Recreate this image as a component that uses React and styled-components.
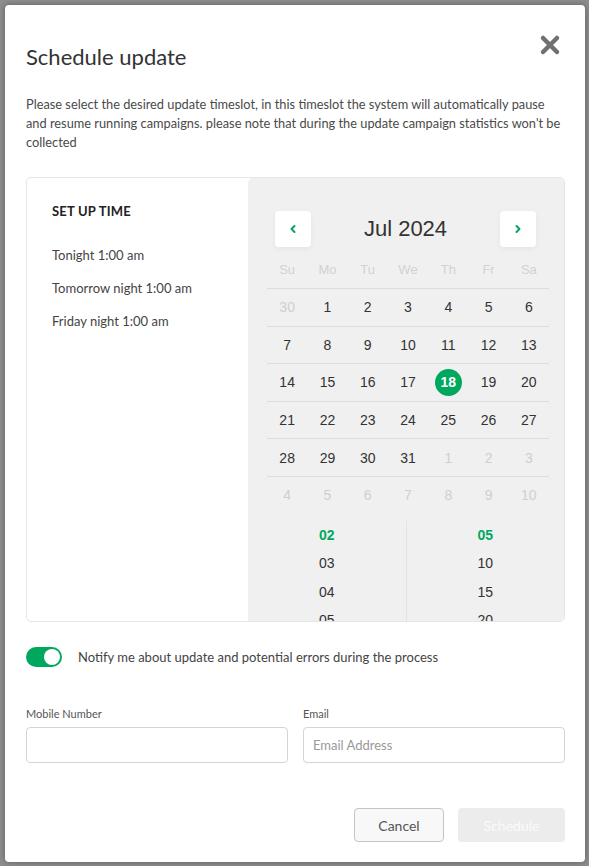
import React from 'react';
import styled, { createGlobalStyle } from 'styled-components';

const Global = createGlobalStyle`
  html, body {
    margin: 0;
    padding: 0;
    background: #8e8e8e;
  }
  body {
    font-family: Lato, "Open Sans", sans-serif;
    color: #333;
  }
`;

const Page = styled.div`
  padding: 5px 4px 4px 5px;
  box-sizing: border-box;
  width: 589px;
  height: 866px;
`;

const Modal = styled.div`
  box-sizing: border-box;
  width: 580px;
  height: 857px;
  background: #fff;
  border-radius: 4px;
  box-shadow: 0 0 6px rgba(0, 0, 0, 0.35);
  padding: 0 20px 0 21px;
  display: flex;
  flex-direction: column;
`;

const Header = styled.div`
  display: flex;
  justify-content: space-between;
  align-items: flex-start;
  padding-top: 38px;
`;

const Title = styled.h1`
  margin: 0;
  font-size: 22px;
  font-weight: 400;
  color: #333;
  line-height: 28px;
`;

const Close = styled.button`
  border: none;
  background: none;
  padding: 0;
  margin: -9px 4px 0 0;
  width: 22px;
  height: 22px;
  cursor: pointer;
`;

const Description = styled.p`
  margin: 24px 0 0;
  font-size: 12.8px;
  line-height: 19px;
  color: #4a4a4a;
`;

const Card = styled.div`
  margin-top: 25px;
  height: 443px;
  border: 1px solid #e6e6e6;
  border-radius: 5px;
  display: flex;
  overflow: hidden;
`;

const Presets = styled.div`
  width: 221px;
  padding: 25px 0 0 25px;
  box-sizing: border-box;
  display: flex;
  flex-direction: column;
`;

const PresetTitle = styled.div`
  font-size: 13px;
  font-weight: 700;
  color: #222;
  letter-spacing: 0.2px;
  margin-bottom: 27px;
`;

const Preset = styled.div`
  font-size: 13px;
  color: #444;
  height: 33px;
  line-height: 18px;
`;

const CalendarPanel = styled.div`
  flex: 1;
  background: #f0f0f0;
  border-top-left-radius: 5px;
  display: flex;
  flex-direction: column;
  font-family: "Liberation Sans", Arial, sans-serif;
`;

const MonthBar = styled.div`
  display: flex;
  align-items: center;
  justify-content: space-between;
  padding: 33px 28px 0 27px;
`;

const NavButton = styled.button`
  width: 36px;
  height: 36px;
  border: none;
  border-radius: 4px;
  background: #fff;
  box-shadow: 0 2px 6px rgba(0, 0, 0, 0.05);
  display: flex;
  align-items: center;
  justify-content: center;
  padding: 0;
`;

const MonthLabel = styled.div`
  font-size: 22px;
  color: #333;
`;

const Grid = styled.div`
  margin: 4px 15px 0 19px;
  display: grid;
  grid-template-columns: repeat(7, 1fr);
`;

const WeekDay = styled.div`
  height: 37px;
  display: flex;
  align-items: center;
  justify-content: center;
  font-size: 13px;
  color: #d2d2d2;
  border-bottom: 1px solid #dcdcdc;
`;

const Day = styled.div`
  height: 36.6px;
  display: flex;
  align-items: center;
  justify-content: center;
  font-size: 14px;
  color: ${p => (p.$muted ? '#cfcfcf' : '#333')};
  border-bottom: ${p => (p.$last ? 'none' : '1px solid #dcdcdc')};
`;

const Selected = styled.span`
  width: 27px;
  height: 27px;
  border-radius: 50%;
  background: #00a85f;
  color: #fff;
  font-weight: 700;
  display: flex;
  align-items: center;
  justify-content: center;
`;

const TimePicker = styled.div`
  margin-top: 7px;
  flex: 1;
  display: flex;
  overflow: hidden;
`;

const TimeColumn = styled.div`
  flex: 1;
  display: flex;
  flex-direction: column;
  align-items: center;
  & + & {
    border-left: 1px solid #e3e3e3;
  }
`;

const TimeItem = styled.div`
  height: 28.5px;
  flex-shrink: 0;
  display: flex;
  align-items: center;
  font-size: 14px;
  font-weight: ${p => (p.$active ? 700 : 400)};
  color: ${p => (p.$active ? '#00a85f' : '#333')};
`;

const NotifyRow = styled.label`
  margin-top: 25px;
  display: flex;
  align-items: center;
  gap: 16px;
  font-size: 13px;
  color: #444;
`;

const Toggle = styled.span`
  width: 36px;
  height: 20px;
  border-radius: 10px;
  background: #00a85f;
  display: flex;
  align-items: center;
  justify-content: flex-end;
  padding: 0 2px;
  box-sizing: border-box;
  &::after {
    content: '';
    width: 16px;
    height: 16px;
    border-radius: 50%;
    background: #fff;
  }
`;

const Fields = styled.div`
  margin-top: 40px;
  display: grid;
  grid-template-columns: 1fr 1fr;
  gap: 15px;
`;

const Field = styled.div`
  display: flex;
  flex-direction: column;
`;

const Label = styled.div`
  font-size: 11px;
  color: #555;
  height: 14px;
  margin-bottom: 6px;
`;

const Input = styled.input`
  height: 36px;
  box-sizing: border-box;
  border: 1px solid #d4d4d4;
  border-radius: 4px;
  padding: 0 9px;
  font-family: Lato, sans-serif;
  font-size: 13px;
  color: #333;
  background: #fff;
  outline: none;
  &::placeholder {
    color: #999;
  }
`;

const Footer = styled.div`
  margin-top: 45px;
  display: flex;
  justify-content: flex-end;
  gap: 14px;
`;

const Button = styled.button`
  height: 34px;
  border-radius: 4px;
  font-family: Lato, sans-serif;
  font-size: 14px;
  padding: 0;
  width: ${p => (p.$primary ? '107px' : '90px')};
  border: ${p => (p.$primary ? 'none' : '1px solid #c4c4c4')};
  background: ${p => (p.$primary ? '#ececec' : '#f8f8f8')};
  color: ${p => (p.$primary ? '#fafafa' : '#555')};
`;

const Chevron = ({ dir }) => (
  <svg width="10" height="10" viewBox="0 0 10 10">
    <path
      d={dir === 'left' ? 'M6.5 2 L3.5 5 L6.5 8' : 'M3.5 2 L6.5 5 L3.5 8'}
      fill="none"
      stroke="#00a85f"
      strokeWidth="2"
      strokeLinecap="round"
      strokeLinejoin="round"
    />
  </svg>
);

const CloseIcon = () => (
  <svg width="22" height="22" viewBox="0 0 22 22">
    <path d="M4 4 L18 18 M18 4 L4 18" stroke="#707070" strokeWidth="4.5" strokeLinecap="round" />
  </svg>
);

const weekDays = ['Su', 'Mo', 'Tu', 'We', 'Th', 'Fr', 'Sa'];

const buildDays = () => {
  const days = [{ n: 30, muted: true }];
  for (let i = 1; i <= 31; i++) days.push({ n: i });
  for (let i = 1; i <= 10; i++) days.push({ n: i, muted: true });
  return days;
};

export default function App() {
  const days = buildDays();
  const hours = ['02', '03', '04', '05'];
  const minutes = ['05', '10', '15', '20'];

  return (
    <Page>
      <Global />
      <Modal>
        <Header>
          <Title>Schedule update</Title>
          <Close aria-label="close"><CloseIcon /></Close>
        </Header>
        <Description>
          Please select the desired update timeslot, in this timeslot the system will automatically pause
          and resume running campaigns. please note that during the update campaign statistics won't be
          collected
        </Description>

        <Card>
          <Presets>
            <PresetTitle>SET UP TIME</PresetTitle>
            <Preset>Tonight 1:00 am</Preset>
            <Preset>Tomorrow night 1:00 am</Preset>
            <Preset>Friday night 1:00 am</Preset>
          </Presets>
          <CalendarPanel>
            <MonthBar>
              <NavButton><Chevron dir="left" /></NavButton>
              <MonthLabel>Jul 2024</MonthLabel>
              <NavButton><Chevron dir="right" /></NavButton>
            </MonthBar>
            <Grid>
              {weekDays.map(d => <WeekDay key={d}>{d}</WeekDay>)}
              {days.map((d, i) => (
                <Day key={i} $muted={d.muted} $last={i >= 35}>
                  {!d.muted && d.n === 18 ? <Selected>18</Selected> : d.n}
                </Day>
              ))}
            </Grid>
            <TimePicker>
              <TimeColumn>
                {hours.map((h, i) => <TimeItem key={h} $active={i === 0}>{h}</TimeItem>)}
              </TimeColumn>
              <TimeColumn>
                {minutes.map((m, i) => <TimeItem key={m} $active={i === 0}>{m}</TimeItem>)}
              </TimeColumn>
            </TimePicker>
          </CalendarPanel>
        </Card>

        <NotifyRow>
          <Toggle />
          Notify me about update and potential errors during the process
        </NotifyRow>

        <Fields>
          <Field>
            <Label>Mobile Number</Label>
            <Input />
          </Field>
          <Field>
            <Label>Email</Label>
            <Input placeholder="Email Address" />
          </Field>
        </Fields>

        <Footer>
          <Button>Cancel</Button>
          <Button $primary>Schedule</Button>
        </Footer>
      </Modal>
    </Page>
  );
}
